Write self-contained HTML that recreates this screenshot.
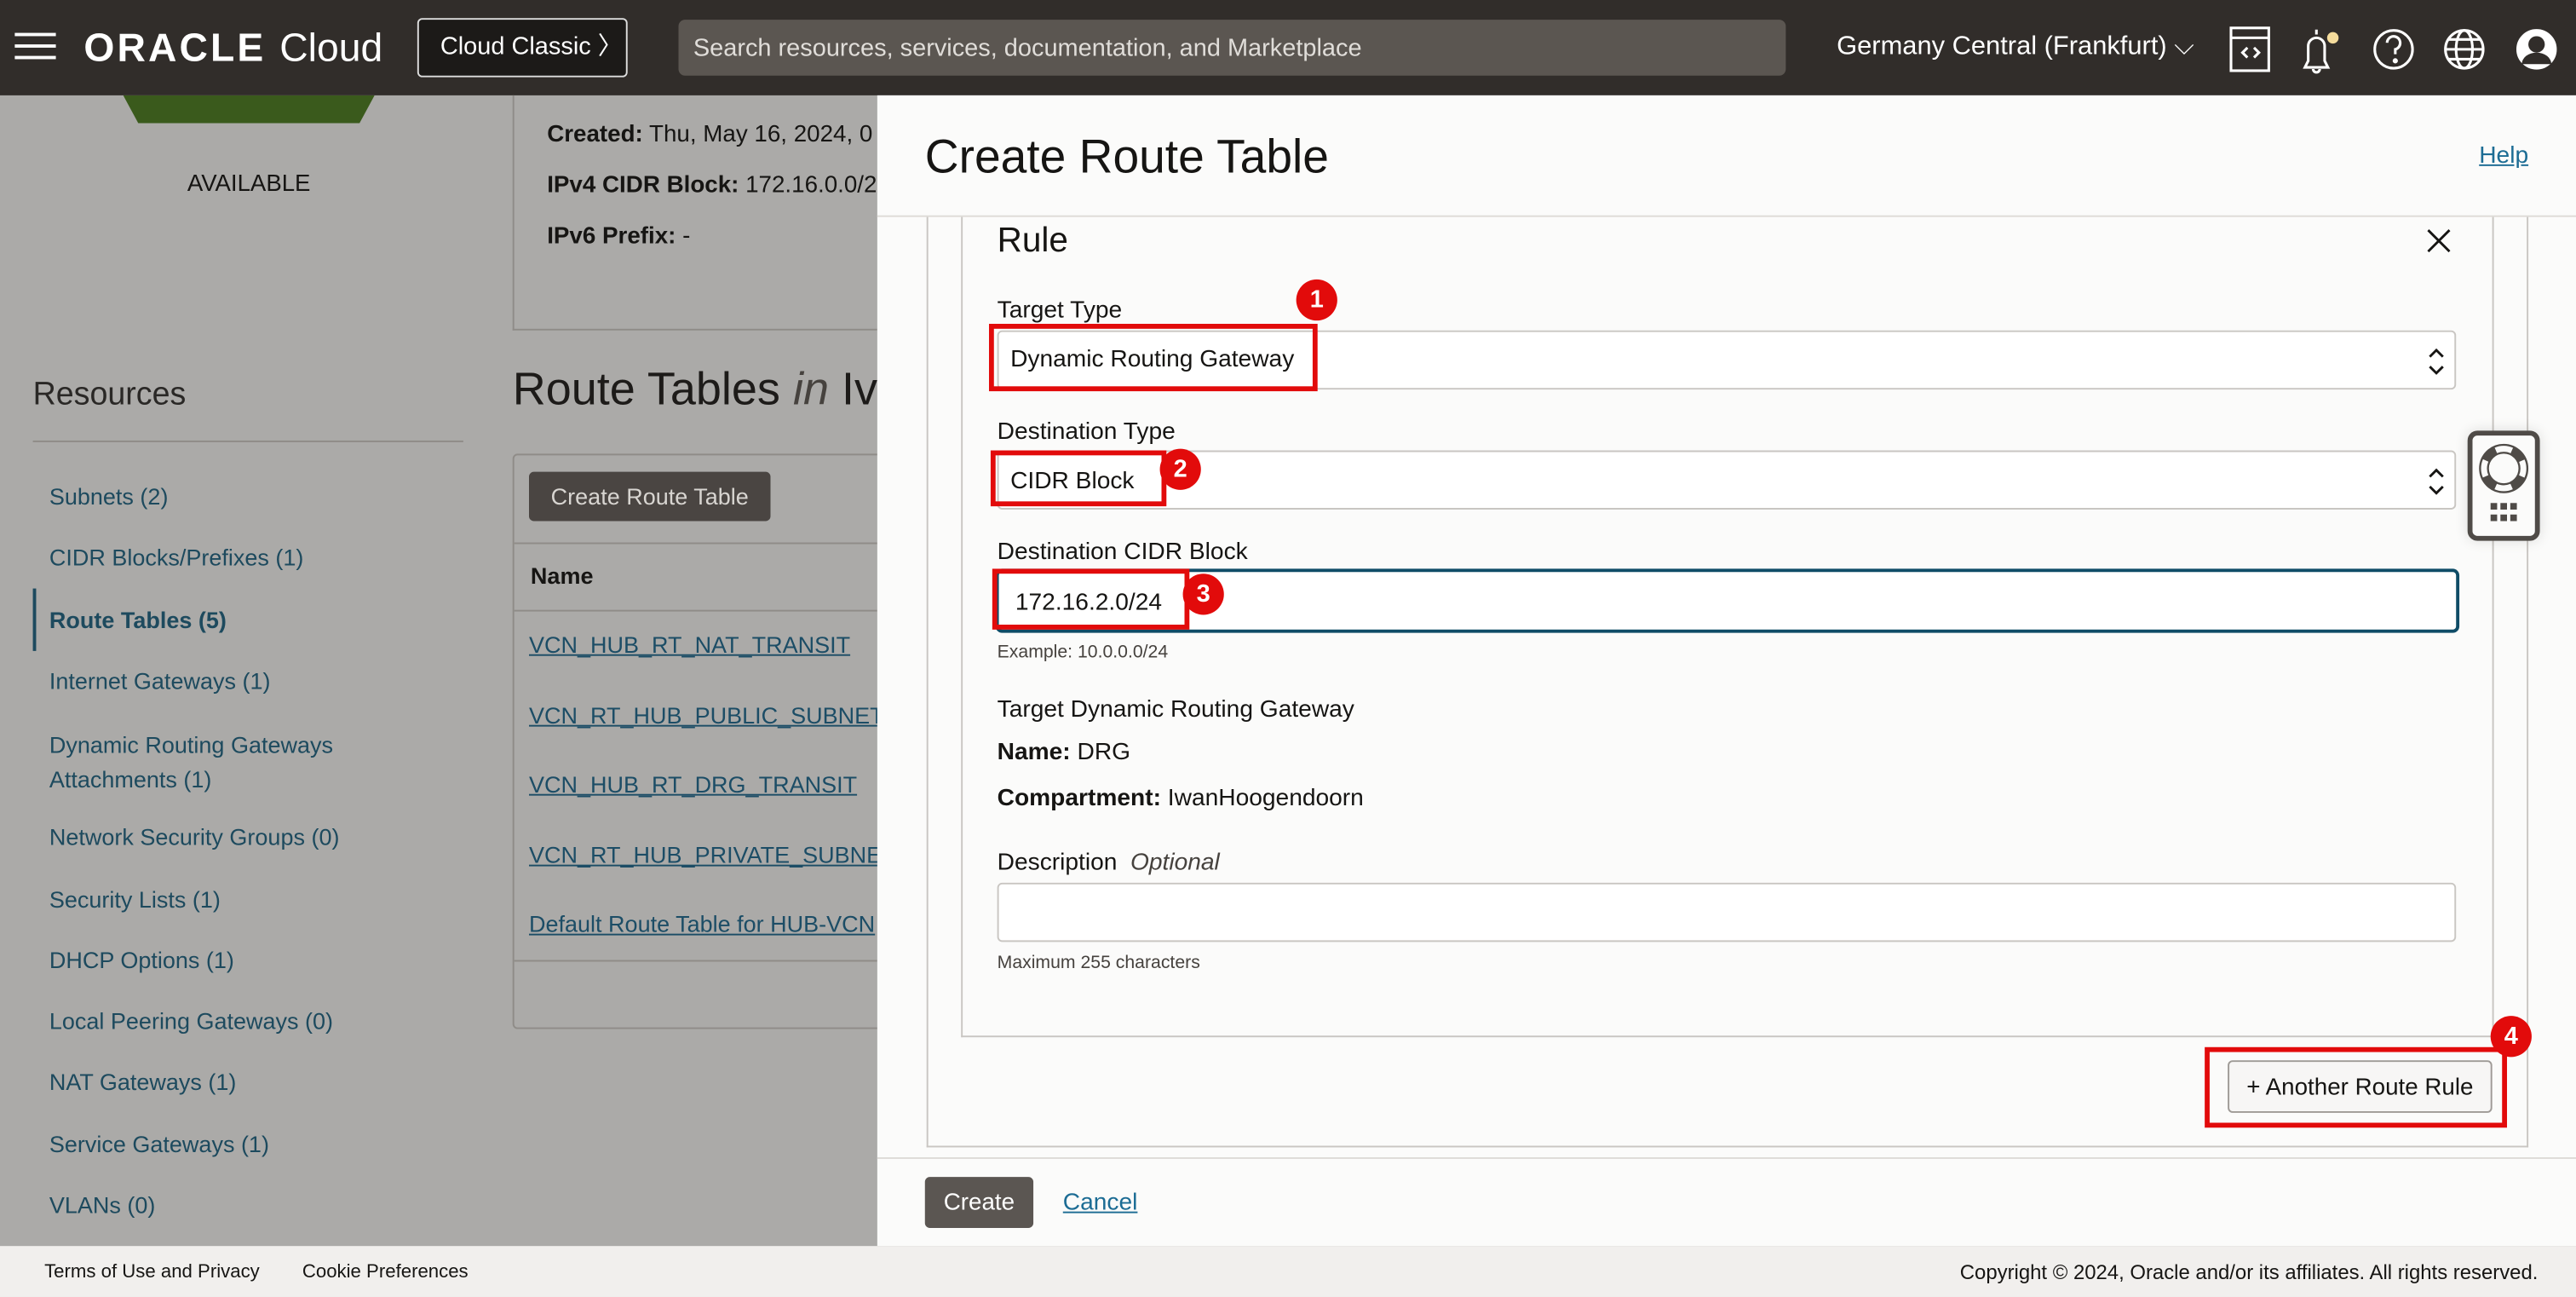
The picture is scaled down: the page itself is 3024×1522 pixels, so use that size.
<!DOCTYPE html>
<html><head><meta charset="utf-8"><style>
html,body{margin:0;padding:0;width:3024px;height:1522px;overflow:hidden;background:#abaaa8}
#s{position:absolute;left:0;top:0;width:1568px;height:789px;transform:scale(1.92857,1.929);transform-origin:0 0;font-family:"Liberation Sans",sans-serif;color:#161513}
.a{position:absolute;white-space:nowrap}
.hd{position:absolute;left:0;top:0;width:1568px;height:58px;background:#312d2a}
.lk{color:#1c4d66;text-decoration:underline;font-size:14px}
.lt{font-size:14px;color:#1d4a5e}
.red{position:absolute;border:3px solid #e20b0b;box-sizing:border-box}
.bd{position:absolute;width:25px;height:25px;border-radius:50%;background:#e20b0b;color:#fff;font-size:15px;font-weight:bold;text-align:center;line-height:25px}
.sel{position:absolute;border:1px solid #c9c6c2;border-radius:3px;background:#fff;box-sizing:border-box}
.lab{font-size:14.6px;color:#161513}
</style></head><body><div id="s">
<div class="hd"></div>
<div class="a" style="left:9px;top:20px;width:25px;height:2px;background:#fff;box-shadow:0 7px 0 #fff,0 14px 0 #fff"></div>
<div class="a" style="left:51px;top:16px;color:#fff;font-size:24px;font-weight:bold;letter-spacing:1.6px">ORACLE <span style="font-weight:normal;letter-spacing:0">Cloud</span></div>
<div class="a" style="left:254px;top:11px;width:128px;height:36px;border:1px solid #ddd;border-radius:3px;background:#1c1a18;box-sizing:border-box;color:#fff;font-size:15px;line-height:34px;padding-left:13px">Cloud Classic 〉</div>
<div class="a" style="left:413px;top:12px;width:674px;height:34px;border-radius:4px;background:#5b5651;color:#e0ddd9;font-size:15px;line-height:36px;padding-left:9px;box-sizing:border-box">Search resources, services, documentation, and Marketplace</div>
<div class="a" style="left:1118px;top:20px;color:#fff;font-size:16px">Germany Central (Frankfurt) ⌵</div>
<svg class="a" style="left:1350px;top:14px" width="210" height="32" viewBox="0 0 210 32" fill="none" stroke="#fff" stroke-width="1.6">
<rect x="8" y="3" width="23" height="26"/><line x1="8" y1="9" x2="31" y2="9"/><path d="M18 15l-3 3 3 3M22 15l3 3-3 3"/>
<path d="M53 27h14l-2-4v-9a5 5 0 0 0-10 0v9z M58 28a2 2 0 0 0 4 0 M60 4v3"/><circle cx="70" cy="9" r="3.5" fill="#f5dc9c" stroke="none"/>
<circle cx="107" cy="16" r="11.5"/><path d="M103 12a4 4 0 1 1 5 4v3" /><circle cx="108" cy="23" r=".8" fill="#fff"/>
<circle cx="150" cy="16" r="11.5"/><ellipse cx="150" cy="16" rx="5" ry="11.5"/><line x1="138.5" y1="16" x2="161.5" y2="16"/><line x1="140" y1="10" x2="160" y2="10"/><line x1="140" y1="22" x2="160" y2="22"/>
<circle cx="194" cy="16" r="11.5" fill="#fff"/><circle cx="194" cy="13" r="5" fill="#312d2a" stroke="none"/><path d="M185 25a9 7 0 0 1 18 0" fill="#312d2a" stroke="none"/>
</svg>
<!-- left background -->
<div class="a" style="left:75px;top:58px;width:153px;height:17px;background:#3a5a1c;clip-path:polygon(0 0,100% 0,94% 100%,6% 100%)"></div>
<div class="a" style="left:114px;top:104px;font-size:14.3px">AVAILABLE</div>
<div class="a" style="left:312px;top:58px;width:1px;height:143px;background:#8f8c88"></div>
<div class="a" style="left:312px;top:200px;width:222px;height:1px;background:#8f8c88"></div>
<div class="a" style="left:333px;top:74px;font-size:14.4px"><b>Created:</b> Thu, May 16, 2024, 0</div>
<div class="a" style="left:333px;top:105px;font-size:14.4px"><b>IPv4 CIDR Block:</b> 172.16.0.0/2</div>
<div class="a" style="left:333px;top:136px;font-size:14.4px"><b>IPv6 Prefix:</b> -</div>
<div class="a" style="left:20px;top:229px;font-size:19.5px;color:#2a2826">Resources</div>
<div class="a" style="left:20px;top:268px;width:262px;height:1px;background:#8f8c88"></div>
<div class="a lt" style="left:30px;top:294px">Subnets (2)</div>
<div class="a lt" style="left:30px;top:331px">CIDR Blocks/Prefixes (1)</div>
<div class="a" style="left:20px;top:358px;width:2px;height:38px;background:#1d4a5e"></div>
<div class="a lt" style="left:30px;top:369px;font-weight:bold">Route Tables (5)</div>
<div class="a lt" style="left:30px;top:406px">Internet Gateways (1)</div>
<div class="a lt" style="left:30px;top:443px;line-height:21px">Dynamic Routing Gateways<br>Attachments (1)</div>
<div class="a lt" style="left:30px;top:501px">Network Security Groups (0)</div>
<div class="a lt" style="left:30px;top:539px">Security Lists (1)</div>
<div class="a lt" style="left:30px;top:576px">DHCP Options (1)</div>
<div class="a lt" style="left:30px;top:613px">Local Peering Gateways (0)</div>
<div class="a lt" style="left:30px;top:650px">NAT Gateways (1)</div>
<div class="a lt" style="left:30px;top:688px">Service Gateways (1)</div>
<div class="a lt" style="left:30px;top:725px">VLANs (0)</div>
<div class="a" style="left:312px;top:221px;font-size:28px;color:#1d1b19">Route Tables <i style="color:#46423e">in</i> Iv</div>
<div class="a" style="left:312px;top:276px;width:240px;height:350px;border:1px solid #8f8c88;border-radius:3px;box-sizing:border-box"></div>
<div class="a" style="left:322px;top:287px;width:147px;height:30px;background:#4a4542;border-radius:3px;color:#d8d5d1;font-size:14px;line-height:31px;text-align:center">Create Route Table</div>
<div class="a" style="left:313px;top:330px;width:221px;height:1px;background:#8f8c88"></div>
<div class="a" style="left:323px;top:342px;font-size:14px;font-weight:bold">Name</div>
<div class="a" style="left:313px;top:371px;width:221px;height:1px;background:#8f8c88"></div>
<div class="a lk" style="left:322px;top:384px">VCN_HUB_RT_NAT_TRANSIT</div>
<div class="a lk" style="left:322px;top:427px">VCN_RT_HUB_PUBLIC_SUBNET</div>
<div class="a lk" style="left:322px;top:469px">VCN_HUB_RT_DRG_TRANSIT</div>
<div class="a lk" style="left:322px;top:512px">VCN_RT_HUB_PRIVATE_SUBNET</div>
<div class="a lk" style="left:322px;top:554px">Default Route Table for HUB-VCN</div>
<div class="a" style="left:313px;top:584px;width:221px;height:1px;background:#8f8c88"></div>
<!-- panel -->
<div class="a" style="left:534px;top:58px;width:1034px;height:700px;background:#fbfbfa"></div>
<div class="a" style="left:563px;top:80px;font-size:28.6px;color:#161513">Create Route Table</div>
<div class="a" style="left:1509px;top:87px;font-size:14.6px;color:#1c6c94;text-decoration:underline">Help</div>
<div class="a" style="left:534px;top:131px;width:1034px;height:1px;background:#dedbd7"></div>
<div class="a" style="left:564px;top:132px;width:975px;height:566px;border:1px solid #c9c6c2;border-top:none;box-sizing:border-box"></div>
<div class="a" style="left:585px;top:132px;width:933px;height:499px;border:1px solid #c9c6c2;border-top:none;box-sizing:border-box"></div>
<div class="a" style="left:607px;top:135px;font-size:21px">Rule</div>
<svg class="a" style="left:1477px;top:139px" width="15" height="15" stroke="#161513" stroke-width="1.5"><path d="M1 1l13 13M14 1L1 14"/></svg>
<div class="a lab" style="left:607px;top:181px">Target Type</div>
<div class="sel" style="left:607px;top:201px;width:888px;height:36px"></div>
<div class="a lab" style="left:615px;top:211px">Dynamic Routing Gateway</div>
<div class="a lab" style="left:607px;top:255px">Destination Type</div>
<div class="sel" style="left:607px;top:274px;width:888px;height:36px"></div>
<div class="a lab" style="left:615px;top:285px">CIDR Block</div>
<svg class="a" style="left:1476px;top:210px" width="14" height="20" fill="none" stroke="#161513" stroke-width="1.5"><path d="M3 7l4-4 4 4M3 13l4 4 4-4"/></svg>
<svg class="a" style="left:1476px;top:283px" width="14" height="20" fill="none" stroke="#161513" stroke-width="1.5"><path d="M3 7l4-4 4 4M3 13l4 4 4-4"/></svg>
<div class="a lab" style="left:607px;top:328px">Destination CIDR Block</div>
<div class="a" style="left:606px;top:346px;width:891px;height:39px;border:2px solid #0f4c67;border-radius:4px;box-sizing:border-box;background:#fff"></div>
<div class="a lab" style="left:618px;top:359px">172.16.2.0/24</div>
<div class="a" style="left:607px;top:391px;font-size:11px;color:#46423e">Example: 10.0.0.0/24</div>
<div class="a lab" style="left:607px;top:424px">Target Dynamic Routing Gateway</div>
<div class="a lab" style="left:607px;top:450px"><b>Name:</b> DRG</div>
<div class="a lab" style="left:607px;top:478px"><b>Compartment:</b> IwanHoogendoorn</div>
<div class="a lab" style="left:607px;top:517px">Description <i style="color:#46423e;margin-left:4px">Optional</i></div>
<div class="sel" style="left:607px;top:537px;width:888px;height:36px"></div>
<div class="a" style="left:607px;top:580px;font-size:11px;color:#46423e">Maximum 255 characters</div>
<div class="a" style="left:1356px;top:645px;width:161px;height:32px;border:1px solid #9e9a96;border-radius:3px;background:#f7f6f5;box-sizing:border-box;font-size:14.4px;line-height:32px;text-align:center">+ Another Route Rule</div>
<div class="red" style="left:602px;top:197px;width:200px;height:41px"></div>
<div class="red" style="left:603px;top:274px;width:107px;height:34px"></div>
<div class="red" style="left:604px;top:346px;width:120px;height:37px"></div>
<div class="red" style="left:1342px;top:637px;width:184px;height:49px"></div>
<div class="bd" style="left:789px;top:170px">1</div>
<div class="bd" style="left:706px;top:273px">2</div>
<div class="bd" style="left:720px;top:349px">3</div>
<div class="bd" style="left:1516px;top:618px">4</div>
<div class="a" style="left:1502px;top:262px;width:44px;height:67px;border:3px solid #4f4b47;border-radius:6px;background:#fbfbfa;box-sizing:border-box;box-shadow:0 0 8px rgba(0,0,0,.12)"></div>
<svg class="a" style="left:1508px;top:268px" width="32" height="56"><circle cx="16" cy="17" r="12" fill="none" stroke="#4f4b47" stroke-width="6"/><circle cx="16" cy="17" r="12" fill="none" stroke="#fbfbfa" stroke-width="3.6" stroke-dasharray="10 8.85" stroke-dashoffset="5"/><g fill="#4f4b47"><rect x="8" y="38" width="4" height="4"/><rect x="14" y="38" width="4" height="4"/><rect x="20" y="38" width="4" height="4"/><rect x="8" y="45" width="4" height="4"/><rect x="14" y="45" width="4" height="4"/><rect x="20" y="45" width="4" height="4"/></g></svg>
<div class="a" style="left:534px;top:704px;width:1034px;height:1px;background:#dedbd7"></div>
<div class="a" style="left:563px;top:716px;width:66px;height:31px;background:#5b5652;border-radius:3px;color:#fff;font-size:14.4px;line-height:32px;text-align:center">Create</div>
<div class="a" style="left:647px;top:724px;font-size:14.6px;color:#1c6c94;text-decoration:underline">Cancel</div>
<!-- footer -->
<div class="a" style="left:0;top:758px;width:1568px;height:31px;background:#f1efed"></div>
<div class="a" style="left:27px;top:768px;font-size:11.5px;color:#161513">Terms of Use and Privacy</div>
<div class="a" style="left:184px;top:768px;font-size:11.5px;color:#161513">Cookie Preferences</div>
<div class="a" style="left:1193px;top:767px;font-size:12.4px;color:#161513">Copyright © 2024, Oracle and/or its affiliates. All rights reserved.</div>
</div></body></html>
